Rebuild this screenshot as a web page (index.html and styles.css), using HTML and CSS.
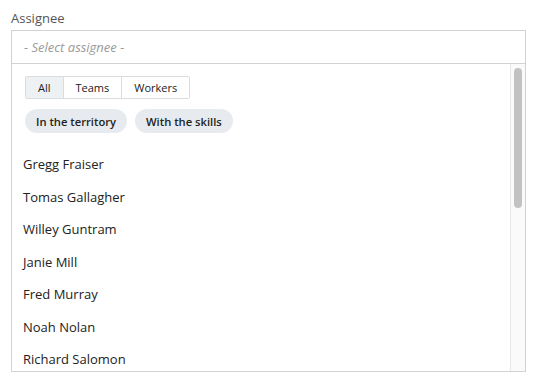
FILE: index.html
```html
<!DOCTYPE html>
<html lang="en">
<head>
    <meta charset="UTF-8">
    <title>Assignee</title>
    <link rel="stylesheet" href="styles.css">
</head>
<body>
    <div class="field">
        <label class="field-label">Assignee</label>
        <div class="picker">
            <div class="picker-input">- Select assignee -</div>
            <div class="picker-body">
                <div class="picker-list">
                    <div class="filters">
                        <div class="segments">
                            <button class="segment active">All</button>
                            <button class="segment">Teams</button>
                            <button class="segment">Workers</button>
                        </div>
                        <div class="chips">
                            <button class="chip">In the territory</button>
                            <button class="chip">With the skills</button>
                        </div>
                    </div>
                    <ul class="options">
                        <li>Gregg Fraiser</li>
                        <li>Tomas Gallagher</li>
                        <li>Willey Guntram</li>
                        <li>Janie Mill</li>
                        <li>Fred Murray</li>
                        <li>Noah Nolan</li>
                        <li>Richard Salomon</li>
                    </ul>
                </div>
                <!-- Barra de rolagem desenhada -->
                <div class="scroll-track">
                    <div class="scroll-thumb"></div>
                </div>
            </div>
        </div>
    </div>
</body>
</html>
```

FILE: styles.css
```css
* {
    margin: 0;
    padding: 0;
    box-sizing: border-box;
}

body {
    font-family: 'Open Sans', 'Liberation Sans', sans-serif;
    background: #ffffff;
    color: #222;
}

.field {
    padding: 9px 13px 0 11px;
}

.field-label {
    display: block;
    font-size: 13px;
    line-height: 18px;
    color: #555;
    margin-bottom: 3px;
}

/* Caixa do seletor */
.picker {
    border: 1px solid #d2d2d2;
    width: 515px;
}

.picker-input {
    height: 33px;
    padding: 0 12px;
    display: flex;
    align-items: center;
    font-size: 13px;
    font-style: italic;
    color: #9a9a9a;
    border-bottom: 1px solid #d2d2d2;
}

.picker-body {
    height: 307px;
    display: flex;
}

.picker-list {
    flex: 1;
    overflow: hidden;
}

.scroll-track {
    width: 15px;
    background: #fafafa;
    border-left: 1px solid #e8e8e8;
    padding: 4px 3px 0 3px;
}

.scroll-thumb {
    height: 140px;
    background: #c2c2c2;
    border-radius: 4px;
}

.filters {
    padding: 11px 13px 0;
}

.segments {
    display: inline-flex;
    border: 1px solid #d9dde1;
    border-radius: 2px;
}

.segment {
    font-family: inherit;
    font-size: 11px;
    color: #222;
    background: #fff;
    border: none;
    border-left: 1px solid #d9dde1;
    height: 21px;
    padding: 0 12px;
}

.segment:first-child {
    border-left: none;
}

.segment.active {
    background: #eef1f4;
}

.chips {
    display: flex;
    gap: 8px;
    margin-top: 10px;
}

.chip {
    font-family: inherit;
    font-size: 11.2px;
    font-weight: 600;
    color: #222;
    background: #e7ebef;
    border: none;
    border-radius: 12px;
    height: 24px;
    padding: 0 11px;
}

.options {
    list-style: none;
    margin-top: 15px;
}

.options li {
    font-size: 13px;
    line-height: 18.5px;
    padding: 7px 11px;
    color: #222;
}
```
